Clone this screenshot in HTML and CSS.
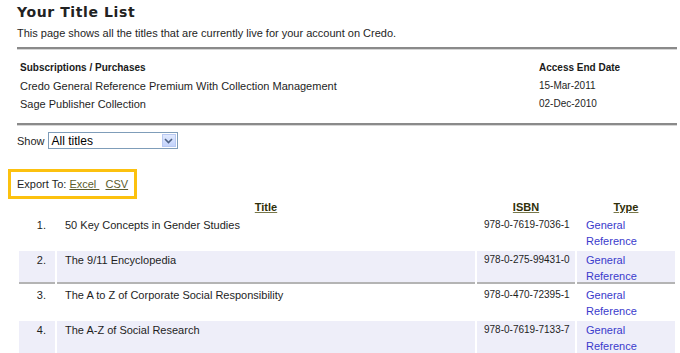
FILE: index.html
```html
<!DOCTYPE html>
<html lang="en">
<head>
<meta charset="utf-8">
<title>Your Title List</title>
<link rel="stylesheet" href="styles.css">
</head>
<body>
<div class="page">
  <h1 class="title">Your Title List</h1>
  <p class="intro">This page shows all the titles that are currently live for your account on Credo.</p>
  <div class="rule"></div>
  <table class="subs">
    <thead>
      <tr><th class="subs-name">Subscriptions / Purchases</th><th>Access End Date</th></tr>
    </thead>
    <tbody>
      <tr><td>Credo General Reference Premium With Collection Management</td><td class="num">15-Mar-2011</td></tr>
      <tr><td>Sage Publisher Collection</td><td class="num">02-Dec-2010</td></tr>
    </tbody>
  </table>
  <div class="rule"></div>
  <div class="show">
    <span>Show</span>
    <div class="select">
      <span class="select-value">All titles</span>
      <span class="select-btn">
        <svg width="9" height="6" viewBox="0 0 9 6"><path d="M1 1 L4.5 4.5 L8 1" fill="none" stroke="#4d6185" stroke-width="1.6"/></svg>
      </span>
    </div>
  </div>
  <div class="export">Export To: <a href="#" class="exp-link">Excel&nbsp;</a>&nbsp; <a href="#" class="exp-link">CSV</a></div>
  <table class="titles">
    <colgroup>
      <col class="c-num"><col class="c-title"><col class="c-isbn"><col class="c-type">
    </colgroup>
    <thead>
      <tr>
        <th></th>
        <th><a href="#" class="sort">Title</a></th>
        <th><a href="#" class="sort">ISBN</a></th>
        <th><a href="#" class="sort">Type</a></th>
      </tr>
    </thead>
    <tbody>
      <tr>
        <td class="idx">1.</td>
        <td>50 Key Concepts in Gender Studies</td>
        <td class="isbn">978-0-7619-7036-1</td>
        <td class="type"><a href="#">General Reference</a></td>
      </tr>
      <tr class="alt sep">
        <td class="idx">2.</td>
        <td>The 9/11 Encyclopedia</td>
        <td class="isbn">978-0-275-99431-0</td>
        <td class="type"><a href="#">General Reference</a></td>
      </tr>
      <tr>
        <td class="idx">3.</td>
        <td>The A to Z of Corporate Social Responsibility</td>
        <td class="isbn">978-0-470-72395-1</td>
        <td class="type"><a href="#">General Reference</a></td>
      </tr>
      <tr class="alt">
        <td class="idx">4.</td>
        <td>The A-Z of Social Research</td>
        <td class="isbn">978-0-7619-7133-7</td>
        <td class="type"><a href="#">General Reference</a></td>
      </tr>
    </tbody>
  </table>
</div>
</body>
</html>
```
FILE: styles.css
```css
html, body {
  margin: 0;
  padding: 0;
  background: #ffffff;
}
body {
  font-family: "Liberation Sans", Arial, sans-serif;
  font-size: 11px;
  color: #1e1e1e;
}
.page {
  padding: 0 3px 0 17px;
}
.title {
  margin: 0;
  padding-top: 3px;
  font-family: "DejaVu Sans", Verdana, sans-serif;
  font-size: 14px;
  letter-spacing: 0.6px;
  line-height: 18px;
  font-weight: bold;
  color: #222222;
}
.intro {
  margin: 4px 0 0;
  line-height: 16px;
}
.rule {
  margin-top: 6px;
  border-top: 2px solid #8a8a8a;
  border-bottom: 1px solid #d6d6d6;
}
.subs {
  margin-top: 9px;
  width: 100%;
  border-collapse: collapse;
}
.subs th, .subs td {
  padding: 0 0 0 3px;
  height: 18px;
  line-height: 18px;
  text-align: left;
  vertical-align: middle;
}
.subs th {
  font-size: 10px;
  font-weight: bold;
  color: #1a1a1a;
}
.subs-name {
  width: 516px;
}
.num {
  font-size: 10px;
}
.subs + .rule {
  margin-top: 10px;
}
.show {
  margin-top: 6px;
  display: flex;
  align-items: center;
  gap: 3px;
  height: 17px;
}
.select {
  position: relative;
  box-sizing: border-box;
  width: 130px;
  height: 17px;
  border: 1px solid #7f9db9;
  background: #ffffff;
  display: flex;
  align-items: center;
}
.select-value {
  padding-left: 3px;
  font-size: 12px;
  color: #000000;
}
.select-btn {
  position: absolute;
  right: 1px;
  top: 1px;
  width: 14px;
  height: 13px;
  box-sizing: border-box;
  border: 1px solid #b8c9f2;
  background: linear-gradient(#e0e9fe, #c3d3fb);
  display: flex;
  align-items: center;
  justify-content: center;
}
.export {
  margin: 20px 0 0 -9px;
  box-sizing: border-box;
  width: 129px;
  height: 30px;
  border: 3px solid #fcc10f;
  padding-left: 6px;
  line-height: 24px;
  white-space: nowrap;
}
.exp-link {
  color: #5c5c2c;
  text-decoration: underline;
}
.titles {
  width: 660px;
  border-collapse: separate;
  border-spacing: 2px;
  table-layout: fixed;
}
.c-num { width: 36px; }
.c-title { width: 418px; }
.c-isbn { width: 98px; }
.c-type { width: 98px; }
.titles th {
  height: 13px;
  line-height: 13px;
  padding: 0;
  text-align: center;
  font-size: 11px;
  font-weight: bold;
}
.sort {
  color: #2f2f0a;
  text-decoration: underline;
  text-decoration-color: #77774a;
}
.titles tbody tr {
  height: 33px;
}
.titles td {
  box-sizing: border-box;
  height: 33px;
  vertical-align: top;
  padding: 1px 4px 0 8px;
  line-height: 16px;
}
.titles .idx {
  text-align: right;
  padding-right: 9px;
  padding-left: 0;
}
.titles .isbn {
  font-size: 10px;
  padding-left: 7px;
}
.titles .type {
  padding-left: 9px;
}
.type a {
  color: #3a3acc;
  text-decoration: none;
}
.alt td {
  background: #eeeef9;
}
.sep td {
  box-shadow: inset 0 -2px 0 #b4b4b4;
}
```
